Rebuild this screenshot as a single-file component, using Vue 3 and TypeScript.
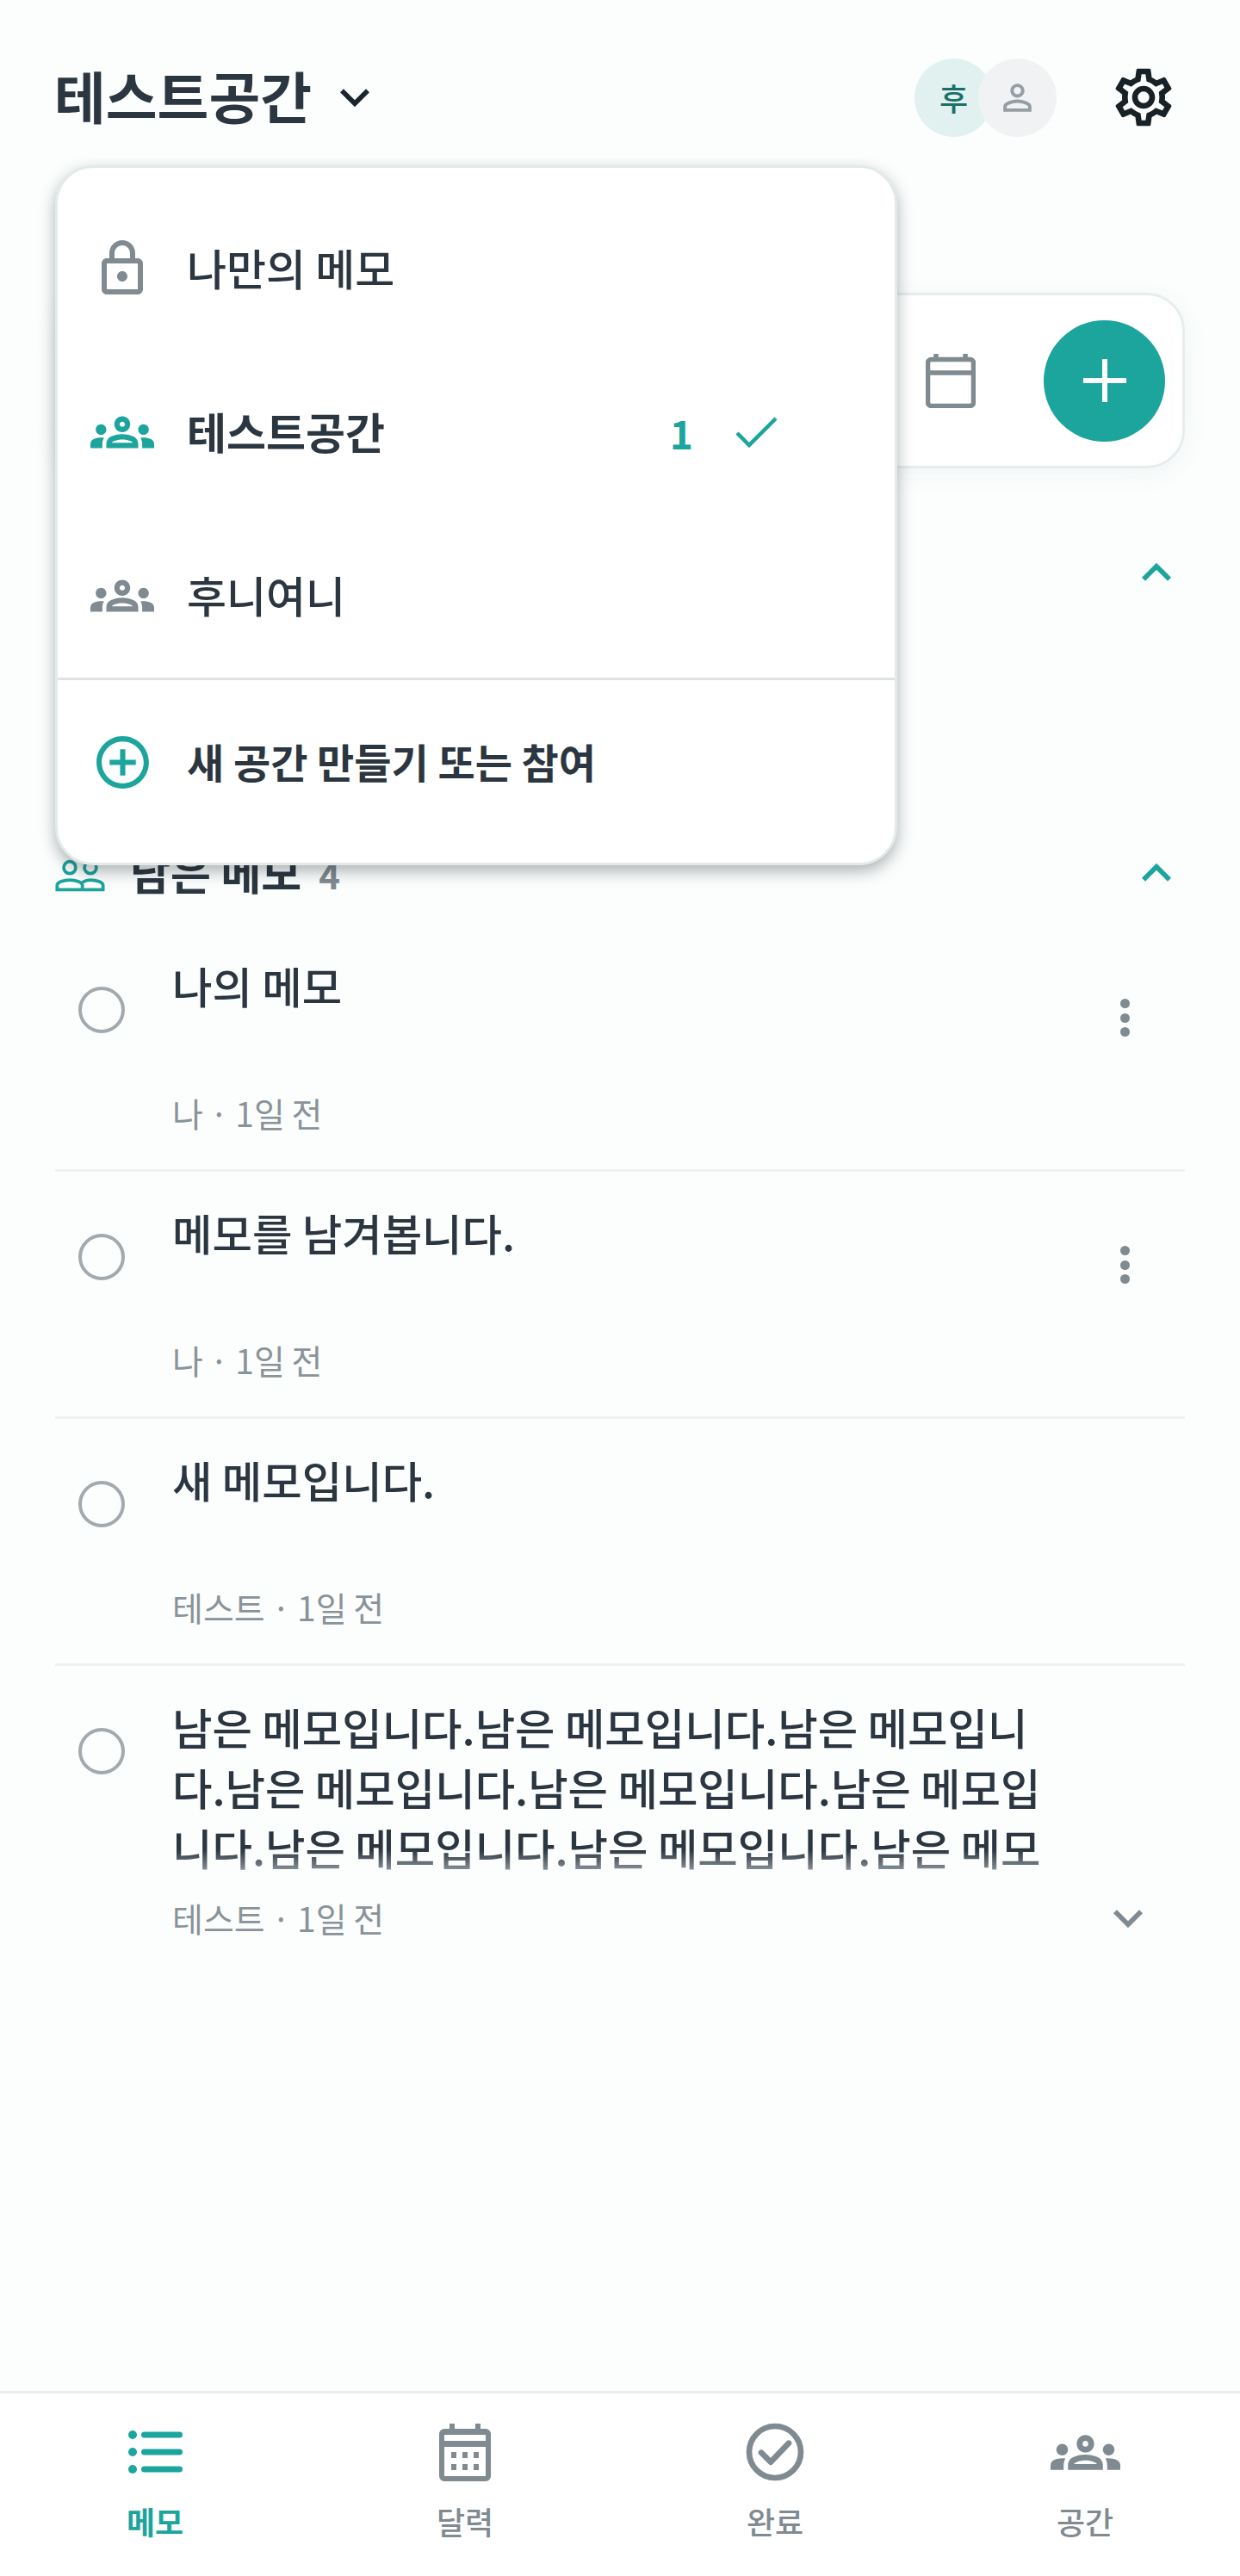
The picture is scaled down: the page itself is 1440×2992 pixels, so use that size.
<script setup lang="ts">
interface Memo {
  id: number
  text: string
  meta: string
  mine: boolean
  long?: boolean
}

const longText = "남은 메모입니다.".repeat(8) + "남은 메모"

const memos: Memo[] = [
  { id: 1, text: "나의 메모", meta: "나 · 1일 전", mine: true },
  { id: 2, text: "메모를 남겨봅니다.", meta: "나 · 1일 전", mine: true },
  { id: 3, text: "새 메모입니다.", meta: "테스트 · 1일 전", mine: false },
  { id: 4, text: longText, meta: "테스트 · 1일 전", mine: false, long: true },
]

const groupsPath = "M4 13c1.1 0 2-.9 2-2s-.9-2-2-2-2 .9-2 2 .9 2 2 2zm1.13 1.1c-.37-.06-.74-.1-1.13-.1-.99 0-1.93.21-2.78.58C.48 14.9 0 15.62 0 16.43V18h4.5v-1.61c0-.83.23-1.61.63-2.29zM20 13c1.1 0 2-.9 2-2s-.9-2-2-2-2 .9-2 2 .9 2 2 2zm4 3.43c0-.81-.48-1.53-1.22-1.85-.85-.37-1.79-.58-2.78-.58-.39 0-.76.04-1.13.1.4.68.63 1.46.63 2.29V18H24v-1.57zm-7.76-2.78c-1.17-.52-2.61-.9-4.24-.9-1.63 0-3.07.39-4.24.9C6.68 14.13 6 15.21 6 16.39V18h12v-1.61c0-1.18-.68-2.26-1.76-2.74zM8.07 16c.09-.23.13-.39.91-.69.97-.38 1.99-.56 3.02-.56s2.05.18 3.02.56c.77.3.81.46.91.69H8.07zM12 8c.55 0 1 .45 1 1s-.45 1-1 1-1-.45-1-1 .45-1 1-1m0-2c-1.66 0-3 1.34-3 3s1.34 3 3 3 3-1.34 3-3-1.34-3-3-3z"
const moreDown = "M16.59 8.59L12 13.17 7.41 8.59 6 10l6 6 6-6z"
const moreUp = "M12 8l-6 6 1.41 1.41L12 10.83l4.59 4.58L18 14z"
</script>

<template>
  <div class="page">
    <header class="top">
      <div class="space-name">
        <h1>테스트공간</h1>
        <svg class="chev dark" viewBox="0 0 24 24"><path :d="moreDown" /></svg>
      </div>
      <div class="top-right">
        <div class="avatars">
          <span class="avatar me">후</span>
          <span class="avatar other">
            <svg viewBox="0 0 24 24"><path d="M12 5.9c1.16 0 2.1.94 2.1 2.1s-.94 2.1-2.1 2.1S9.9 9.16 9.9 8s.94-2.1 2.1-2.1m0 9c2.97 0 6.1 1.46 6.1 2.1v1.1H5.9V17c0-.64 3.13-2.1 6.1-2.1M12 4C9.79 4 8 5.79 8 8s1.79 4 4 4 4-1.79 4-4-1.79-4-4-4zm0 9c-2.67 0-8 1.34-8 4v3h16v-3c0-2.66-5.33-4-8-4z" /></svg>
          </span>
        </div>
        <svg class="gear" viewBox="0 0 24 24"><path d="M19.43 12.98c.04-.32.07-.64.07-.98 0-.34-.03-.66-.07-.98l2.11-1.65c.19-.15.24-.42.12-.64l-2-3.46c-.09-.16-.26-.25-.44-.25-.06 0-.12.01-.17.03l-2.49 1c-.52-.4-1.08-.73-1.69-.98l-.38-2.65C14.46 2.18 14.25 2 14 2h-4c-.25 0-.46.18-.49.42l-.38 2.65c-.61.25-1.17.59-1.69.98l-2.49-1c-.06-.02-.12-.03-.18-.03-.17 0-.34.09-.43.25l-2 3.46c-.13.22-.07.49.12.64l2.11 1.65c-.04.32-.07.65-.07.98 0 .33.03.66.07.98l-2.11 1.65c-.19.15-.24.42-.12.64l2 3.46c.09.16.26.25.44.25.06 0 .12-.01.17-.03l2.49-1c.52.4 1.08.73 1.69.98l.38 2.65c.03.24.24.42.49.42h4c.25 0 .46-.18.49-.42l.38-2.65c.61-.25 1.17-.59 1.69-.98l2.49 1c.06.02.12.03.18.03.17 0 .34-.09.43-.25l2-3.46c.12-.22.07-.49-.12-.64l-2.11-1.65zm-1.98-1.71c.04.31.05.52.05.73 0 .21-.02.43-.05.73l-.14 1.13.89.7 1.08.84-.7 1.21-1.27-.51-1.04-.42-.9.68c-.43.32-.84.56-1.25.73l-1.06.43-.16 1.13-.2 1.35h-1.4l-.19-1.35-.16-1.13-1.06-.43c-.43-.18-.83-.41-1.23-.71l-.91-.7-1.06.43-1.27.51-.7-1.21 1.08-.84.89-.7-.14-1.13c-.03-.31-.05-.54-.05-.74s.02-.43.05-.73l.14-1.13-.89-.7-1.08-.84.7-1.21 1.27.51 1.04.42.9-.68c.43-.32.84-.56 1.25-.73l1.06-.43.16-1.13.2-1.35h1.39l.19 1.35.16 1.13 1.06.43c.43.18.83.41 1.23.71l.91.7 1.06-.43 1.27-.51.7 1.21-1.07.85-.89.7.14 1.13zM12 8c-2.21 0-4 1.79-4 4s1.79 4 4 4 4-1.79 4-4-1.79-4-4-4zm0 6c-1.1 0-2-.9-2-2s.9-2 2-2 2 .9 2 2-.9 2-2 2z" /></svg>
      </div>
    </header>

    <!-- input card, left part sits under the dropdown -->
    <div class="composer">
      <svg class="cal-small" viewBox="0 0 58 64" fill="none">
        <path d="M12 1v7M46 1v7" />
        <rect x="2.5" y="7.5" width="53" height="54" rx="4" />
        <path d="M3 23h52" />
      </svg>
      <button class="add" type="button">
        <svg viewBox="0 0 50 50"><path d="M22 0h6v22h22v6H28v22h-6V28H0v-6h22z" /></svg>
      </button>
    </div>

    <section class="section first">
      <div class="section-head">
        <svg class="chev teal" viewBox="0 0 24 24"><path :d="moreUp" /></svg>
      </div>
    </section>

    <section class="section">
      <div class="section-head">
        <div class="section-title">
          <svg class="people" viewBox="0 0 24 24" fill="none">
            <circle cx="7.5" cy="8.5" r="2.6" />
            <circle cx="16.5" cy="8.5" r="2.6" />
            <path d="M2 18.1v-1.9c0-1.3 3-2.3 5.5-2.3s5.5 1 5.5 2.3v1.9zM13 14.9c1-.6 2.2-1 3.5-1 2.500 0 5.500 1 5.500 2.300v1.900h-9" />
          </svg>
          <span>남은 메모</span>
          <em>4</em>
        </div>
        <svg class="chev teal" viewBox="0 0 24 24"><path :d="moreUp" /></svg>
      </div>

      <ul class="memos">
        <li v-for="memo in memos" :key="memo.id" class="memo">
          <span class="radio"></span>
          <div class="memo-body">
            <p class="memo-text" :class="{ clamped: memo.long }">{{ memo.text }}</p>
            <p class="memo-meta">{{ memo.meta }}</p>
          </div>
          <div v-if="memo.mine" class="kebab"><i></i><i></i><i></i></div>
          <svg v-if="memo.long" class="chev gray row-chev" viewBox="0 0 24 24"><path :d="moreDown" /></svg>
        </li>
      </ul>
    </section>

    <nav class="tabs">
      <div class="tab active">
        <div class="tab-icon">
          <svg class="tab-list" viewBox="0 0 64 50">
            <circle cx="6" cy="5" r="5" /><circle cx="6" cy="25" r="5" /><circle cx="6" cy="45" r="5" />
            <rect x="16" y="1.500" width="48" height="7" rx="3.500" />
            <rect x="16" y="21.500" width="48" height="7" rx="3.500" />
            <rect x="16" y="41.500" width="48" height="7" rx="3.500" />
          </svg>
        </div>
        <span>메모</span>
      </div>
      <div class="tab">
        <div class="tab-icon">
          <svg class="tab-cal" viewBox="0 0 60 67">
            <rect x="12" y="0" width="6" height="10" /><rect x="42" y="0" width="6" height="10" />
            <path fill-rule="evenodd" d="M6 6h48a6 6 0 0 1 6 6v49a6 6 0 0 1-6 6H6a6 6 0 0 1-6-6V12a6 6 0 0 1 6-6zM6 13v7h48v-7zM6 27v34h48V27z" />
            <rect x="14" y="33" width="6" height="7" /><rect x="27" y="33" width="6" height="7" /><rect x="40" y="33" width="6" height="7" />
            <rect x="14" y="47" width="6" height="7" /><rect x="27" y="47" width="6" height="7" /><rect x="40" y="47" width="6" height="7" />
          </svg>
        </div>
        <span>달력</span>
      </div>
      <div class="tab">
        <div class="tab-icon">
          <svg class="tab-check" viewBox="0 0 24 24" fill="none">
            <circle cx="12" cy="12" r="9" />
            <path d="M7.200 12.200l3.300 3.300 6.300-6.600" />
          </svg>
        </div>
        <span>완료</span>
      </div>
      <div class="tab">
        <div class="tab-icon">
          <svg class="tab-groups" viewBox="0 0 24 24"><path :d="groupsPath" /></svg>
        </div>
        <span>공간</span>
      </div>
    </nav>

    <!-- space picker, opened over the page -->
    <div class="dropdown">
      <div class="option">
        <span class="option-icon">
          <svg class="lock" viewBox="0 0 24 24"><path d="M18 8h-1V6c0-2.760-2.240-5-5-5S7 3.240 7 6v2H6c-1.100 0-2 .9-2 2v10c0 1.100.9 2 2 2h12c1.100 0 2-.9 2-2V10c0-1.100-.9-2-2-2zM9 6c0-1.660 1.340-3 3-3s3 1.340 3 3v2H9V6zm9 14H6V10h12v10zm-6-3c1.100 0 2-.9 2-2s-.9-2-2-2-2 .9-2 2 .9 2 2 2z" /></svg>
        </span>
        <span class="option-label">나만의 메모</span>
      </div>
      <div class="option selected">
        <span class="option-icon">
          <svg class="groups teal-fill" viewBox="0 0 24 24"><path :d="groupsPath" /></svg>
        </span>
        <span class="option-label">테스트공간</span>
        <span class="count">1</span>
        <svg class="tick" viewBox="0 0 50 38" fill="none"><path d="M2 20l14 14L47 3" /></svg>
      </div>
      <div class="option">
        <span class="option-icon">
          <svg class="groups" viewBox="0 0 24 24"><path :d="groupsPath" /></svg>
        </span>
        <span class="option-label">후니여니</span>
      </div>
      <div class="option create">
        <span class="option-icon">
          <svg class="plus-circle" viewBox="0 0 24 24"><path d="M13 7h-2v4H7v2h4v4h2v-4h4v-2h-4V7zm-1-5C6.480 2 2 6.480 2 12s4.480 10 10 10 10-4.480 10-10S17.520 2 12 2zm0 18c-4.410 0-8-3.590-8-8s3.590-8 8-8 8 3.590 8 8-3.590 8-8 8z" /></svg>
        </span>
        <span class="option-label">새 공간 만들기 또는 참여</span>
      </div>
    </div>
  </div>
</template>

<style>
html,
body {
  margin: 0;
  background: #fcfefe;
}
</style>

<style scoped>
.page {
  position: relative;
  width: 1440px;
  height: 2992px;
  display: flex;
  flex-direction: column;
  background: #fcfefe;
  color: #2b3640;
  font-family: "Noto Sans CJK KR", "Noto Sans", sans-serif;
  overflow: hidden;
}

.top {
  height: 226px;
  flex: none;
  padding: 0 64px;
  display: flex;
  align-items: center;
  justify-content: space-between;
}

.space-name {
  display: flex;
  align-items: center;
  gap: 16px;
}

.space-name h1 {
  margin: 0 0 6px -1px;
  font-size: 65px;
  line-height: 90px;
  font-weight: 700;
}

.chev {
  width: 68px;
  height: 68px;
  flex: none;
}

.chev.dark path {
  fill: #1c252b;
}

.chev.teal path {
  fill: #1ba59c;
}

.chev.gray path {
  fill: #7f8a91;
}

.top-right {
  display: flex;
  align-items: center;
  gap: 61px;
  margin-right: 8px;
}

.avatars {
  display: flex;
}

.avatar {
  width: 91px;
  height: 91px;
  border-radius: 50%;
  display: flex;
  align-items: center;
  justify-content: center;
}

.avatar.me {
  background: #e1f1f0;
  color: #1b6f68;
  font-size: 36px;
  font-weight: 500;
}

.avatar.other {
  background: #f1f2f4;
  margin-left: -17px;
}

.avatar.other svg {
  width: 49px;
  height: 49px;
  fill: #959ea3;
}

.gear {
  width: 80px;
  height: 80px;
  fill: #182226;
}

.composer {
  flex: none;
  height: 204px;
  box-sizing: border-box;
  margin: 114px 64px 0;
  padding-right: 20px;
  background: #fff;
  border: 3px solid #e6eded;
  border-radius: 44px;
  box-shadow: 0 6px 30px rgba(60, 80, 80, 0.06);
  display: flex;
  align-items: center;
  justify-content: flex-end;
  gap: 79px;
}

.cal-small {
  width: 58px;
  height: 64px;
  stroke: #7f8a91;
  stroke-width: 5.5;
}

.add {
  width: 141px;
  height: 141px;
  padding: 0;
  border: none;
  border-radius: 50%;
  background: #1ba59c;
  display: flex;
  align-items: center;
  justify-content: center;
}

.add svg {
  width: 50px;
  height: 50px;
  fill: #fff;
}

.section.first {
  height: 440px;
  flex: none;
}

.section-head {
  padding: 0 63px 0 64px;
  height: 60px;
  display: flex;
  align-items: center;
  justify-content: space-between;
}

.section.first .section-head {
  justify-content: flex-end;
  margin-top: 91px;
}

.section-title {
  display: flex;
  align-items: center;
  gap: 26px;
  font-size: 51px;
  font-weight: 700;
}

.section-title span {
  margin-bottom: 5px;
}

.section-title em {
  font-style: normal;
  font-size: 42px;
  margin-left: -6px;
  color: #7f8a91;
}

.people {
  width: 64px;
  height: 64px;
  margin: 5px 0 0 -3px;
  stroke: #1ba59c;
  stroke-width: 1.400;
}

.memos {
  list-style: none;
  margin: 30px 64px 0;
  padding: 0;
}

.memo {
  position: relative;
  display: flex;
  padding-bottom: 41px;
  border-bottom: 3px solid #eff1f2;
}

.memo:last-child {
  border-bottom: none;
}

.radio {
  flex: none;
  box-sizing: border-box;
  width: 54px;
  height: 54px;
  margin: 72px 0 0 27px;
  border: 4px solid #a2aaae;
  border-radius: 50%;
}

.memo-body {
  width: 1020px;
  margin-left: 55px;
  padding-top: 35px;
}

.memo-text {
  margin: 0;
  min-height: 136px;
  font-size: 50.5px;
  line-height: 70px;
  font-weight: 500;
}

.memo-text.clamped {
  -webkit-mask-image: linear-gradient(#000 85%, rgba(0, 0, 0, 0.4));
  mask-image: linear-gradient(#000 85%, rgba(0, 0, 0, 0.4));
}

.memo-meta {
  margin: 22px 0 0;
  font-size: 39px;
  line-height: 50px;
  word-spacing: -1px;
  color: #8a9399;
}

.kebab {
  position: absolute;
  top: 86px;
  left: 1237px;
  display: flex;
  flex-direction: column;
  gap: 5.5px;
}

.kebab i {
  width: 11px;
  height: 11px;
  border-radius: 50%;
  background: #7f8a91;
}

.row-chev {
  position: absolute;
  left: 1212px;
  top: 259px;
}

.tabs {
  margin-top: auto;
  flex: none;
  height: 215px;
  box-sizing: border-box;
  padding-top: 28px;
  background: #fff;
  border-top: 3px solid #e8eeee;
  display: flex;
}

.tab {
  flex: 1;
  display: flex;
  flex-direction: column;
  align-items: center;
  gap: 15px;
  font-size: 36px;
  line-height: 50px;
  font-weight: 500;
  color: #7f8a91;
}

.tab.active {
  color: #1ba59c;
  font-weight: 700;
}

.tab-icon {
  height: 80px;
  display: flex;
  align-items: center;
  justify-content: center;
}

.tab-list {
  width: 64px;
  height: 50px;
  fill: #1ba59c;
}

.tab-cal {
  width: 60px;
  height: 67px;
  fill: #7f8a91;
}

.tab-check {
  width: 80px;
  height: 80px;
  stroke: #7f8a91;
  stroke-width: 2;
  stroke-linecap: round;
  stroke-linejoin: round;
}

.tab-groups {
  width: 81px;
  height: 81px;
  fill: #7f8a91;
}

.dropdown {
  position: absolute;
  top: 192px;
  left: 64px;
  width: 978px;
  height: 813px;
  box-sizing: border-box;
  padding-top: 22px;
  background: #fff;
  border: 3px solid #e3eaea;
  border-radius: 44px;
  box-shadow: 0 7px 18px rgba(20, 30, 30, 0.34);
}

.option {
  height: 190px;
  padding-left: 38px;
  padding-right: 135px;
  display: flex;
  align-items: center;
  font-size: 50px;
  font-weight: 500;
}

.option.selected {
  font-weight: 700;
}

.option.create {
  border-top: 3px solid #dfe3e6;
  font-size: 47px;
  font-weight: 700;
}

.option-label {
  margin-bottom: 4px;
}

.option-icon {
  flex: none;
  width: 74px;
  height: 74px;
  margin-right: 38px;
  display: flex;
  align-items: center;
  justify-content: center;
}

.lock {
  width: 72px;
  height: 72px;
  flex: none;
  fill: #7f8a91;
}

.groups {
  width: 74px;
  height: 74px;
  flex: none;
  fill: #7f8a91;
}

.groups.teal-fill {
  fill: #1ba59c;
}

.plus-circle {
  width: 73px;
  height: 73px;
  flex: none;
  fill: #1ba59c;
}

.count {
  margin-left: auto;
  font-size: 46px;
  font-weight: 700;
  color: #1ba59c;
}

.tick {
  width: 50px;
  height: 38px;
  margin-left: 49px;
  stroke: #1ba59c;
  stroke-width: 4.500;
}
</style>
